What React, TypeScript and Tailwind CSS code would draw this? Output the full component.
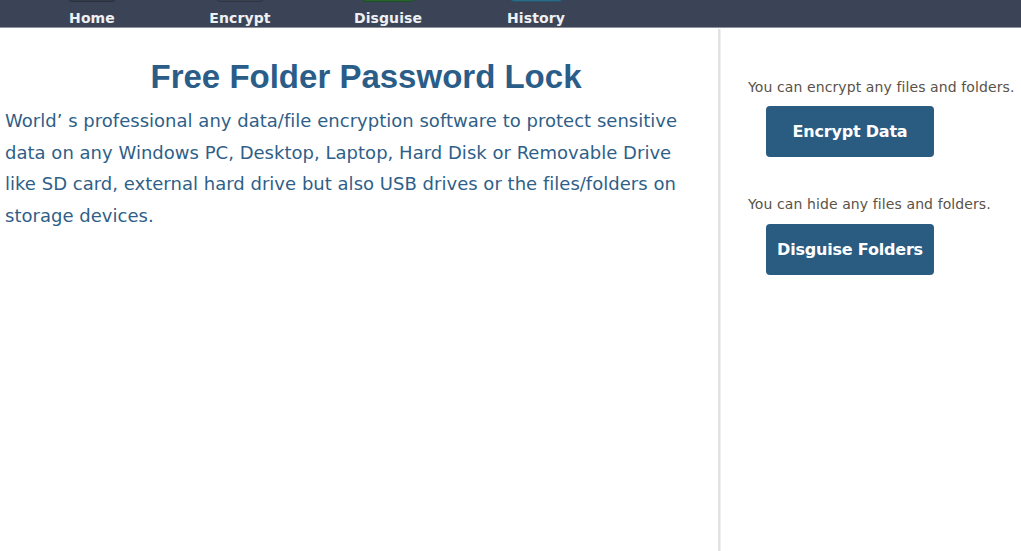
import React from 'react';

const navItems = [
  { label: 'Home', box: 'w-[48px] bg-[#333a48] border border-[#2a303c]' },
  { label: 'Encrypt', box: 'w-[48px] bg-[#3a4150] border border-[#2f3542]' },
  { label: 'Disguise', box: 'w-[53px] bg-[#27632f] border border-[#1f4f26]' },
  { label: 'History', box: 'w-[53px] bg-[#2d6a85] border border-[#24566c]' },
];

const sideActions = [
  { hint: 'You can encrypt any files and folders.', button: 'Encrypt Data' },
  { hint: 'You can hide any files and folders.', button: 'Disguise Folders' },
];

const App: React.FC = () => {
  return (
    <div className="w-[1021px] h-[551px] overflow-hidden bg-white font-['DejaVu_Sans',sans-serif]">
      {/* top nav, icons are scrolled off above */}
      <nav className="h-[28px] bg-[#3b4456] border-b border-[#8d929b] flex pl-[18px] overflow-hidden">
        {navItems.map((item) => (
          <div key={item.label} className="w-[148px] flex flex-col items-center">
            <div className={`h-[40px] -mt-[38px] rounded-[4px] ${item.box}`} />
            <span className="mt-[8px] text-[14px] leading-[16px] font-bold text-[#eef0f3] tracking-[0.1px]">
              {item.label}
            </span>
          </div>
        ))}
      </nav>

      <div className="flex h-[523px]">
        <main className="w-[718px] pt-[30px] pl-[5px] pr-[20px]">
          <h1 className="text-center pl-[29px] font-['Liberation_Sans',Arial,sans-serif] font-bold text-[33px] leading-[38px] text-[#2b5d89]">
            Free Folder Password Lock
          </h1>
          <p className="mt-[9px] text-[18px] leading-[31.6px] text-[#2f5f88] tracking-[0.02px]">
            World’ s professional any data/file encryption software to protect sensitive data on any Windows PC,
            Desktop, Laptop, Hard Disk or Removable Drive like SD card, external hard drive but also USB drives or
            the files/folders on storage devices.
          </p>
        </main>

        <div className="w-[3px] mt-[1px] bg-[#e2e2e2] border-r border-[#f0f0f0]" />

        <aside className="flex-1 pl-[27px] pt-[50px]">
          {sideActions.map((a, i) => (
            <div key={a.button} className={i === 0 ? 'mb-[38px]' : ''}>
              <p className="text-[14px] leading-[18px] text-[#5a5248] tracking-[0.1px] whitespace-nowrap">{a.hint}</p>
              <button className={`${i === 0 ? 'mt-[10px]' : 'mt-[11px]'} ml-[18px] w-[168px] h-[51px] rounded-[4px] bg-[#2a5c82] text-white font-bold text-[16px] tracking-[-0.2px]`}>
                {a.button}
              </button>
            </div>
          ))}
        </aside>
      </div>
    </div>
  );
};

export default App;
